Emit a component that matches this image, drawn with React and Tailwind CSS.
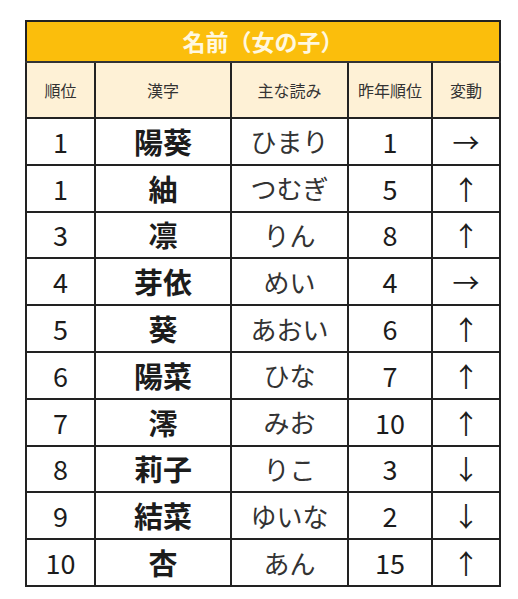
const rows = [
  { rank: "1", kanji: "陽葵", yomi: "ひまり", last: "1", move: "→" },
  { rank: "1", kanji: "紬", yomi: "つむぎ", last: "5", move: "↑" },
  { rank: "3", kanji: "凛", yomi: "りん", last: "8", move: "↑" },
  { rank: "4", kanji: "芽依", yomi: "めい", last: "4", move: "→" },
  { rank: "5", kanji: "葵", yomi: "あおい", last: "6", move: "↑" },
  { rank: "6", kanji: "陽菜", yomi: "ひな", last: "7", move: "↑" },
  { rank: "7", kanji: "澪", yomi: "みお", last: "10", move: "↑" },
  { rank: "8", kanji: "莉子", yomi: "りこ", last: "3", move: "↓" },
  { rank: "9", kanji: "結菜", yomi: "ゆいな", last: "2", move: "↓" },
  { rank: "10", kanji: "杏", yomi: "あん", last: "15", move: "↑" },
];

const headers = ["順位", "漢字", "主な読み", "昨年順位", "変動"];

export default function App() {
  return (
    <div
      className="w-[518px] h-[599px] bg-white pt-[20px] pl-[25px]"
      style={{ fontFamily: '"Noto Sans CJK JP", "Noto Sans", sans-serif' }}
    >
      <table className="table-fixed border-collapse w-[474px] border-2 border-[#222] text-[#1c1c1c]">
        <colgroup>
          <col className="w-[69px]" />
          <col className="w-[136px]" />
          <col className="w-[117px]" />
          <col className="w-[84px]" />
          <col className="w-[68px]" />
        </colgroup>
        <thead>
          <tr className="h-[41px] bg-[#fbbe0c]">
            <th
              colSpan={5}
              className="border-b-2 border-[#333] text-[23px] font-bold text-[#fff8e0] leading-none"
            >
              名前（女の子）
            </th>
          </tr>
          <tr className="h-[56px] bg-[#fef1d6]">
            {headers.map((h) => (
              <th
                key={h}
                className="border-2 border-[#222] text-[16px] font-normal text-[#333] leading-none"
              >
                {h}
              </th>
            ))}
          </tr>
        </thead>
        <tbody>
          {rows.map((r, i) => (
            <tr key={i} className="h-[46.8px]">
              <td className="border-2 border-[#222] text-center text-[27px] leading-none">
                {r.rank}
              </td>
              <td className="border-2 border-[#222] text-center text-[29px] font-bold leading-none">
                {r.kanji}
              </td>
              <td className="border-2 border-[#222] text-center text-[26px] text-[#333] leading-none">
                {r.yomi}
              </td>
              <td className="border-2 border-[#222] text-center text-[27px] leading-none">
                {r.last}
              </td>
              <td className="border-2 border-[#222] text-center text-[27px] leading-none">
                {r.move}
              </td>
            </tr>
          ))}
        </tbody>
      </table>
    </div>
  );
}
